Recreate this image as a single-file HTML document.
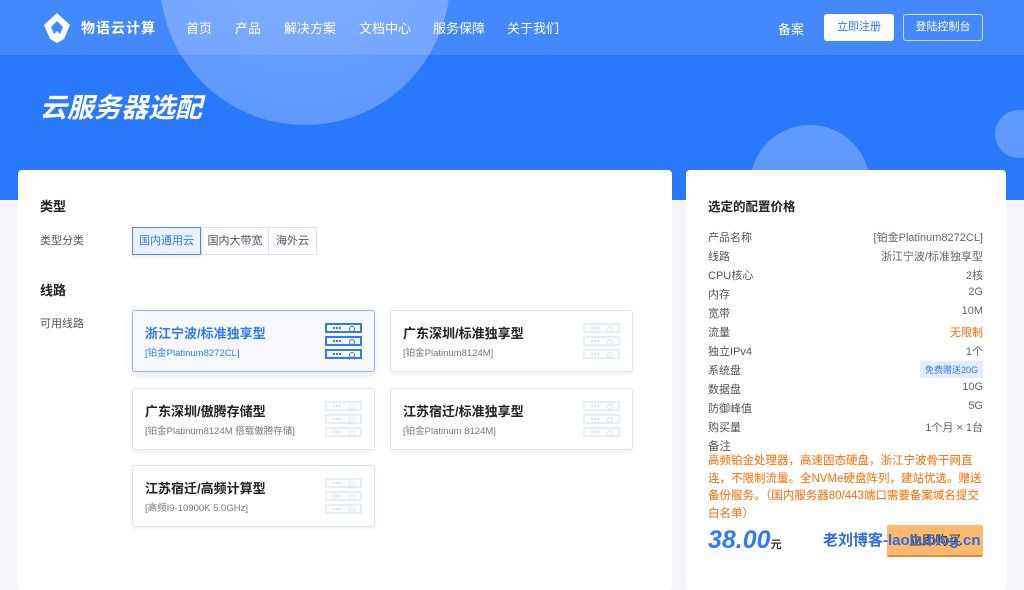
<!DOCTYPE html>
<html><head><meta charset="utf-8"><style>
*{margin:0;padding:0;box-sizing:border-box}
body{width:1024px;height:567px;overflow:hidden;position:relative;background:#f4f6fb;font-family:"Liberation Sans","Noto Sans CJK SC",sans-serif;color:#333}
.ban{position:absolute;left:0;top:0;width:1024px;height:200px;background:#2a78fc;overflow:hidden}
.c{position:absolute;border-radius:50%;background:rgba(255,255,255,.25)}
.hd{position:absolute;left:0;top:0;width:1024px;height:55px;background:rgba(255,255,255,.12)}
.nav{position:absolute;top:18px;color:#fff;font-size:13px}
.card{position:absolute;background:#fff;border-radius:4px;top:170px;height:420px}
.h{position:absolute;font-size:13px;font-weight:bold;color:#222}
.lbl{position:absolute;font-size:11px;color:#555}
.tab{position:absolute;top:227px;height:28px;line-height:27px;font-size:11px;color:#555;border:1px solid #dfe3ef;background:#fbfcff;text-align:center}
.ln{position:absolute;width:243px;height:62px;border:1px solid #dde5f3;border-radius:3px;background:#fff;box-shadow:0 2px 4px rgba(0,0,0,.06)}
.ln b{position:absolute;left:12px;top:12px;font-size:13px;color:#222}
.ln i{position:absolute;left:12px;top:34px;font-style:normal;font-size:9.5px;color:#777}
.sv{position:absolute;right:12px;top:12px;width:37px}
.sv div{height:10px;margin-bottom:3px;border:2px solid #e6eefc;position:relative}
.sv div:before{content:"";position:absolute;left:6px;top:2px;width:8px;height:2px;background:repeating-linear-gradient(90deg,#d7e2f7 0 2px,transparent 2px 3px)}
.sv div:after{content:"";position:absolute;right:5px;top:1px;width:4px;height:4px;border:1px solid #d7e2f7;border-radius:50%}
.on .sv div{border-color:#2f7af7;background:#fff}
.on .sv div:before{background:repeating-linear-gradient(90deg,#2f7af7 0 2px,transparent 2px 3px)}.on .sv div:after{border-color:#2f7af7}
.row{position:absolute;left:708px;width:275px;font-size:11px;color:#555}
.row span{float:right;color:#666}
</style></head><body>
<div class="ban">
<div class="c" style="left:160px;top:-165px;width:290px;height:290px;background:radial-gradient(circle at 50% 30%,rgba(255,255,255,.35),rgba(255,255,255,.22))"></div>
<div class="c" style="left:750px;top:125px;width:120px;height:120px"></div>
<div class="c" style="left:995px;top:110px;width:48px;height:48px"></div>
<div class="hd"></div>
</div>
<svg style="position:absolute;left:42px;top:12px" width="30" height="32" viewBox="0 0 30 32"><path d="M15 1 L28 13 L22 27 L15 31 L8 27 L2 13Z M15 9 L9 15 L12 22 L15 19 L18 22 L21 15Z" fill="#fff" fill-rule="evenodd"/></svg>
<div class="nav" style="left:81px;top:18px;font-size:14px;font-weight:bold;letter-spacing:1px">物语云计算</div>
<div class="nav" style="left:186px">首页</div>
<div class="nav" style="left:235px">产品</div>
<div class="nav" style="left:284px">解决方案</div>
<div class="nav" style="left:359px">文档中心</div>
<div class="nav" style="left:433px">服务保障</div>
<div class="nav" style="left:507px">关于我们</div>
<div class="nav" style="left:778px;top:19px">备案</div>
<div style="position:absolute;left:824px;top:14px;width:70px;height:27px;background:#fff;border-radius:3px;color:#2a78fc;font-size:11px;text-align:center;line-height:27px">立即注册</div>
<div style="position:absolute;left:903px;top:14px;width:80px;height:27px;border:1px solid #cfe0ff;border-radius:3px;color:#fff;font-size:11px;text-align:center;line-height:25px">登陆控制台</div>
<div style="position:absolute;left:40px;top:86px;color:#fff;font-size:27px;font-weight:bold;font-style:italic">云服务器选配</div>

<div class="card" style="left:18px;width:654px"></div>
<div class="h" style="left:40px;top:196px">类型</div>
<div class="lbl" style="left:40px;top:232px">类型分类</div>
<div class="tab" style="left:132px;width:69px;border-color:#4a8af7;background:#e9f1ff;color:#2f7af7;box-shadow:0 2px 4px rgba(0,0,0,.08)">国内通用云</div>
<div class="tab" style="left:201px;width:68px">国内大带宽</div>
<div class="tab" style="left:268px;width:49px">海外云</div>
<div class="h" style="left:40px;top:280px">线路</div>
<div class="lbl" style="left:40px;top:315px">可用线路</div>
<div class="ln on" style="left:132px;top:310px;border-color:#8db4f8;background:#f7f9ff;box-shadow:0 3px 8px rgba(0,0,0,.1)"><b style="color:#2f7af7">浙江宁波/标准独享型</b><i style="color:#2f7af7">[铂金Platinum8272CL]</i><div class="sv"><div></div><div></div><div></div></div></div>
<div class="ln" style="left:390px;top:310px"><b>广东深圳/标准独享型</b><i>[铂金Platinum8124M]</i><div class="sv"><div></div><div></div><div></div></div></div>
<div class="ln" style="left:132px;top:388px"><b>广东深圳/傲腾存储型</b><i>[铂金Platinum8124M 搭载傲腾存储]</i><div class="sv"><div></div><div></div><div></div></div></div>
<div class="ln" style="left:390px;top:388px"><b>江苏宿迁/标准独享型</b><i>[铂金Platinum 8124M]</i><div class="sv"><div></div><div></div><div></div></div></div>
<div class="ln" style="left:132px;top:465px"><b>江苏宿迁/高频计算型</b><i>[高频I9-10900K 5.0GHz]</i><div class="sv"><div></div><div></div><div></div></div></div>

<div class="card" style="left:686px;width:320px"></div>
<div class="h" style="left:708px;top:196px;font-size:12.5px">选定的配置价格</div>
<div class="row" style="top:229px">产品名称<span>[铂金Platinum8272CL]</span></div>
<div class="row" style="top:248px">线路<span>浙江宁波/标准独享型</span></div>
<div class="row" style="top:267px">CPU核心<span>2核</span></div>
<div class="row" style="top:286px">内存<span>2G</span></div>
<div class="row" style="top:305px">宽带<span>10M</span></div>
<div class="row" style="top:324px">流量<span style="color:#ff6a00">无限制</span></div>
<div class="row" style="top:343px">独立IPv4<span>1个</span></div>
<div class="row" style="top:362px">系统盘<span style="background:#e3edff;color:#2f7af7;font-size:9px;padding:2px 5px;margin-top:-1px">免费赠送20G</span></div>
<div class="row" style="top:381px">数据盘<span>10G</span></div>
<div class="row" style="top:400px">防御峰值<span>5G</span></div>
<div class="row" style="top:419px">购买量<span>1个月 × 1台</span></div>
<div class="row" style="top:438px;font-size:11.5px">备注</div>
<div class="row" style="top:453px;width:278px;color:#ff6a00;line-height:17.5px;font-size:11.5px">高频铂金处理器，高速固态硬盘，浙江宁波骨干网直连，不限制流量。全NVMe硬盘阵列，建站优选。赠送备份服务。（国内服务器80/443端口需要备案域名提交白名单）</div>
<div style="position:absolute;left:708px;top:526px;color:#2f7af7;font-size:25px;font-weight:bold;font-style:italic">38.00<span style="font-size:11px;color:#333;font-style:normal">元</span></div>
<div style="position:absolute;left:887px;top:525px;width:96px;height:32px;background:#fdb96d;border-bottom:2px solid #e08a3a;border-radius:2px;text-align:center;line-height:32px;font-size:13px;color:#333">立即购买</div>
<div style="position:absolute;left:823px;top:529px;font-size:15px;font-weight:bold;color:#2f6ae0">老刘博客-laoliublog.cn</div>
</body></html>
